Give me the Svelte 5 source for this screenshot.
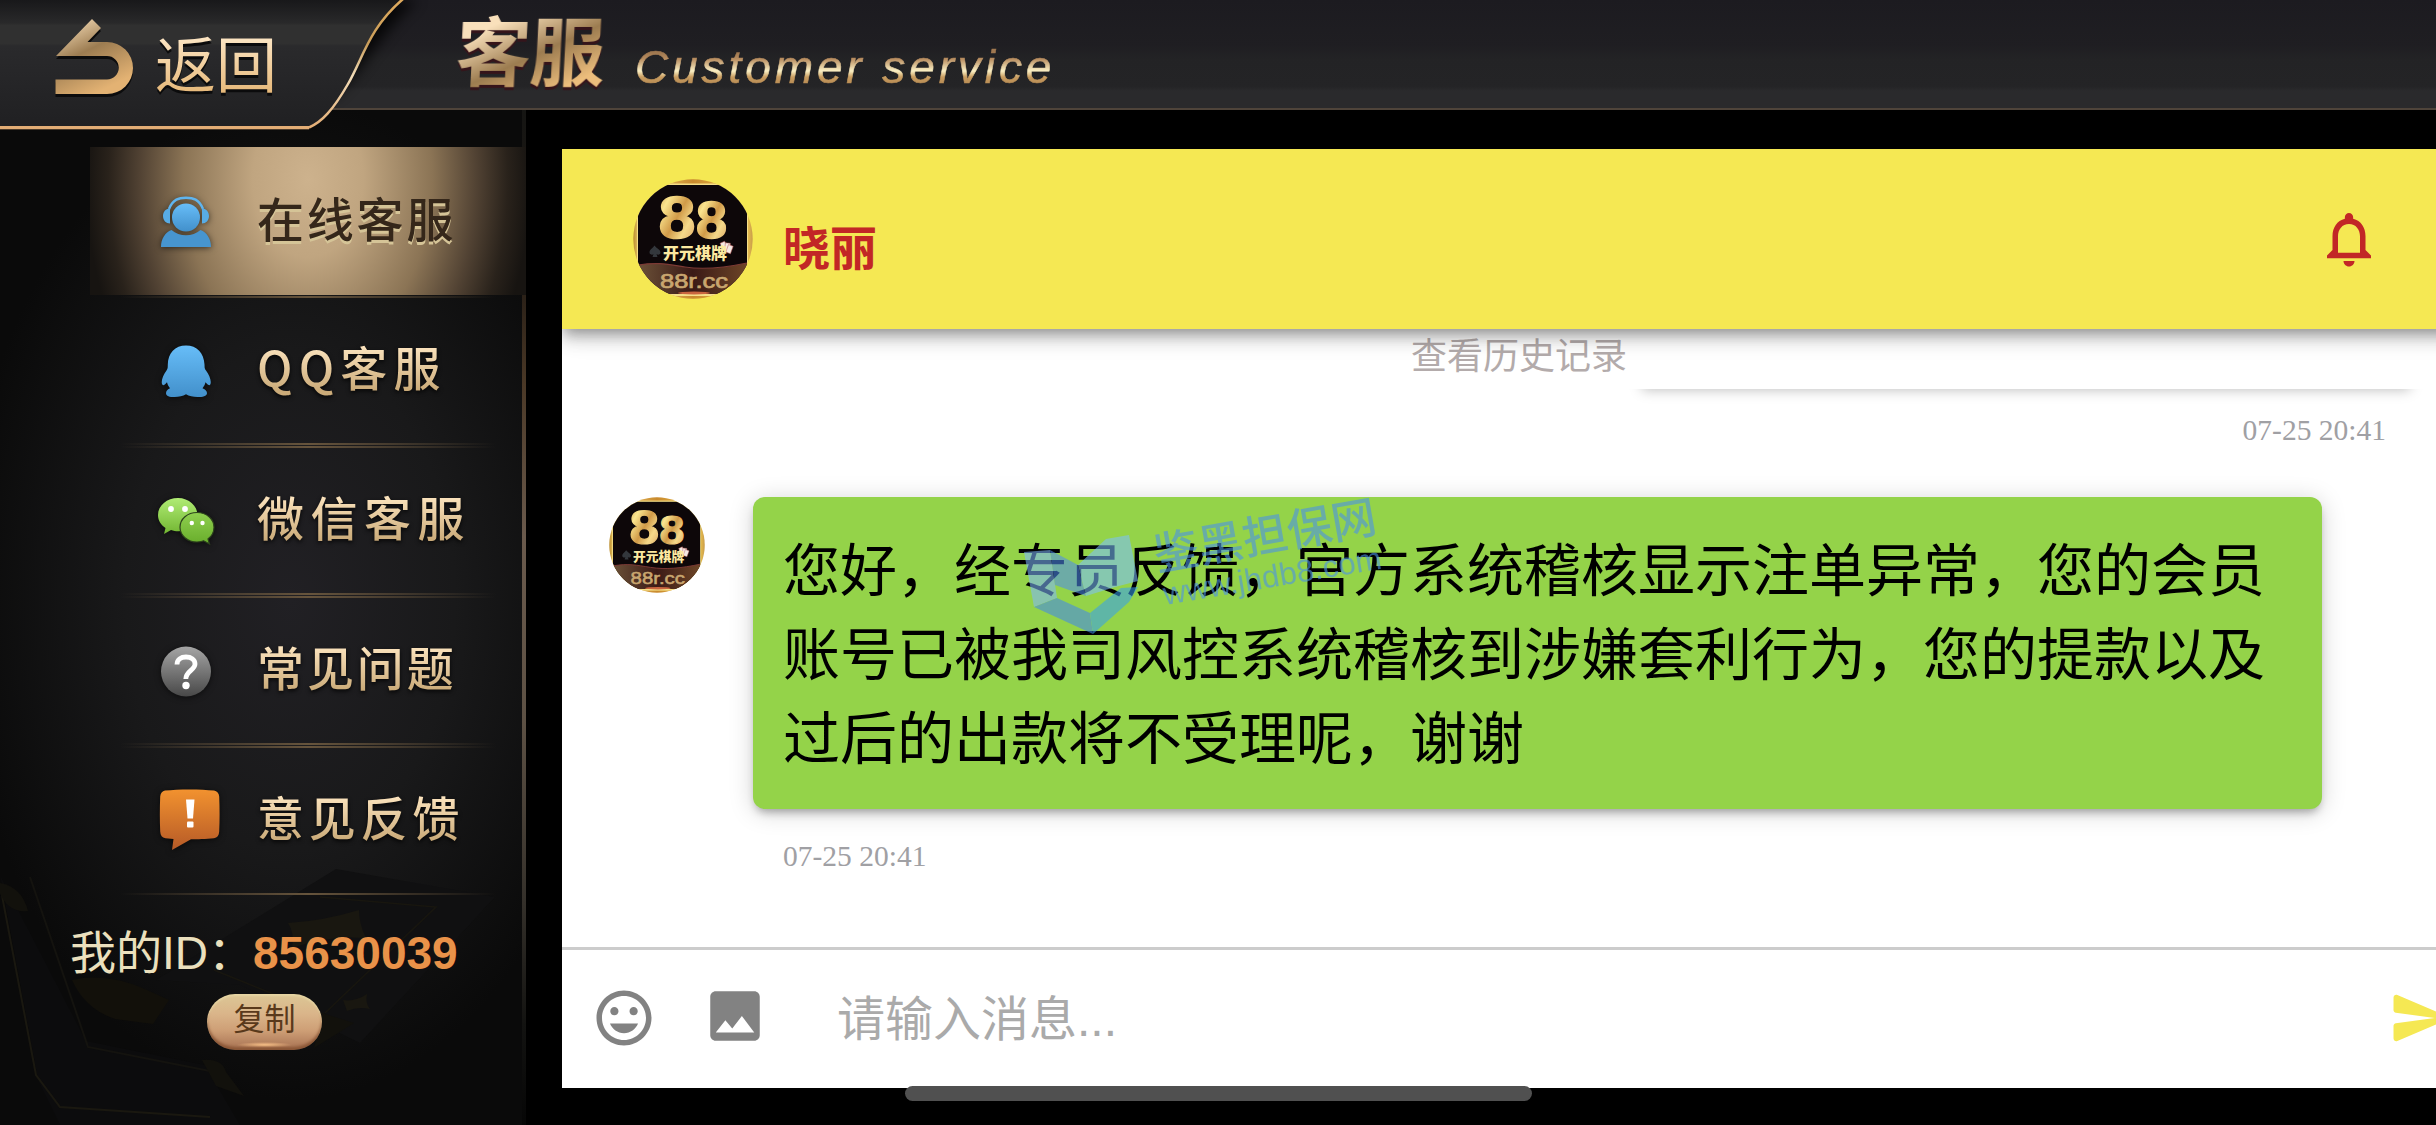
<script lang="ts">
	type Item = { id: string; label: string; spacing: number };

	const items: Item[] = [
		{ id: 'online', label: '在线客服', spacing: 2.8 },
		{ id: 'qq', label: 'QQ客服', spacing: 6.2 },
		{ id: 'wechat', label: '微信客服', spacing: 6.5 },
		{ id: 'faq', label: '常见问题', spacing: 2.9 },
		{ id: 'feedback', label: '意见反馈', spacing: 4.8 }
	];

	const lines = [
		'您好，经专员反馈，官方系统稽核显示注单异常，您的会员',
		'账号已被我司风控系统稽核到涉嫌套利行为，您的提款以及',
		'过后的出款将不受理呢，谢谢'
	];

	let active = $state('online');
	let message = $state('');
</script>

{#snippet avatar(size: number)}
	<svg class="avatar" width={size} height={size} viewBox="0 0 120 120">
		<defs>
			<linearGradient id="coin" x1="0" y1="0" x2="1" y2="1">
				<stop offset="0" stop-color="#c98f3c" />
				<stop offset=".25" stop-color="#fbe58f" />
				<stop offset=".5" stop-color="#d09a48" />
				<stop offset=".7" stop-color="#f5d98a" />
				<stop offset="1" stop-color="#d79a5c" />
			</linearGradient>
			<linearGradient id="rim" x1="0" y1="0" x2="1" y2="0">
				<stop offset="0" stop-color="#b98a2c" />
				<stop offset=".06" stop-color="#f3d778" />
				<stop offset=".5" stop-color="#c98a2e" />
				<stop offset=".94" stop-color="#f0c84f" />
				<stop offset="1" stop-color="#c79a4a" />
			</linearGradient>
			<linearGradient id="floor" x1="0" y1="0" x2="1" y2="0">
				<stop offset="0" stop-color="#6b5138" />
				<stop offset=".5" stop-color="#3b1a16" />
				<stop offset="1" stop-color="#6d4527" />
			</linearGradient>
			<clipPath id="round"><circle cx="60" cy="60" r="59.7" /></clipPath>
		</defs>
		<g clip-path="url(#round)">
			<rect width="120" height="120" fill="url(#rim)" />
			<rect x="4" y="4.500" width="111" height="112.500" fill="#f6df88" />
			<rect x="5" y="6" width="109" height="109" fill="#0d0709" />
			<path d="M5 86c20-3 28-1 47 2s38 1 62-4v31H5z" fill="url(#floor)" />
			<path d="M5 86c20-3 28-1 47 2s38 1 62-4" fill="none" stroke="#7c3a35" stroke-width="1.200" />
			<ellipse cx="61" cy="114" rx="16" ry="1.500" fill="#c9653f" />
			<g fill="url(#coin)" stroke="url(#coin)" font-family="'Liberation Sans', sans-serif" font-weight="700">
				<text x="25.500" y="59" font-size="60" stroke-width="1.500" textLength="37" lengthAdjust="spacingAndGlyphs">8</text>
				<text x="63" y="59" font-size="51" stroke-width="1.500" textLength="31" lengthAdjust="spacingAndGlyphs">8</text>
			</g>
			<path d="M21.500 66.500c-2 3-5 4-5 7 0 2 3 3 4 1.500l-1 3h5l-1-3c1.500 1.500 4 .5 4-1.500 0-3-4-4-6-7z" fill="#33373c" />
			<g fill="#f4e9e4" stroke="#b85a5a" stroke-width=".5">
				<rect x="89" y="63" width="5" height="8" transform="rotate(-25 91 68)" />
				<rect x="92" y="64" width="5" height="8" transform="rotate(5 94 68)" />
				<rect x="94" y="66" width="5" height="8" transform="rotate(20 96 70)" />
			</g>
			<text x="30" y="80" font-size="16" font-weight="900" fill="#fbe9a0" font-family="'Noto Sans CJK SC', sans-serif">开元棋牌</text>
			<text x="27" y="109" font-size="21" fill="#c9a66f" stroke="#c9a66f" stroke-width=".7" textLength="68" lengthAdjust="spacingAndGlyphs" font-family="'Liberation Sans', sans-serif">88r.cc</text>
		</g>
	</svg>
{/snippet}

{#snippet icon(id: string)}
	<svg class="icon" width="64" height="64" viewBox="0 0 64 64">
		<defs>
			<linearGradient id="blue" x1="0" y1="0" x2="0" y2="1">
				<stop offset="0" stop-color="#67bdf8" />
				<stop offset="1" stop-color="#4290cb" />
			</linearGradient>
			<linearGradient id="lime" x1="0" y1="0" x2="0" y2="1">
				<stop offset="0" stop-color="#b0ec74" />
				<stop offset="1" stop-color="#72b632" />
			</linearGradient>
			<linearGradient id="moss" x1="0" y1="0" x2="0" y2="1">
				<stop offset="0" stop-color="#8fcf4f" />
				<stop offset="1" stop-color="#68ad2b" />
			</linearGradient>
			<linearGradient id="grey" x1="0" y1="0" x2="0" y2="1">
				<stop offset="0" stop-color="#a5a5a5" />
				<stop offset="1" stop-color="#484848" />
			</linearGradient>
			<linearGradient id="orange" x1="0" y1="0" x2="0" y2="1">
				<stop offset="0" stop-color="#f2922f" />
				<stop offset="1" stop-color="#b65a27" />
			</linearGradient>
		</defs>
		{#if id === 'online'}
			<path d="M7 57c0-8 4-14.500 10.500-17 8 7 21 7 29 0C53 42.500 57 49 57 57z" fill="#4795cf" />
			<circle cx="32" cy="27.500" r="14" fill="url(#blue)" />
			<path d="M15 19C19 9 25 7.800 32 7.800S45 9 49 19" fill="none" stroke="#5fb4ee" stroke-width="2.500" />
			<path d="M16 18.500v15c-4 0-7-3-7-7.500s3-7.500 7-7.500zM48 18.500v15c4 0 7-3 7-7.500s-3-7.500-7-7.500z" fill="#58ace5" />
		{:else if id === 'qq'}
			<path
				d="M32 5.500c11 0 18 7.500 18.500 19 .2 3-.2 3.500 1.500 6 3.500 5 5.500 10 4.500 13.500-.6 2.200-2.500 1-5-1.800-.6 2.500-1.500 4-3 6 3 1.400 4.500 3 4.500 5 0 3-4.500 3.800-9.500 3.800-4.500 0-8.500-1-11.500-2.800-3 1.800-7 2.800-11.500 2.800-5 0-8.500-.8-8.500-3.800 0-2 1.200-3.600 4-5-1.500-2-2.400-3.500-3-6-2.500 2.800-4.200 4-5 1.800-1-3.500 1-8.500 4.500-13.500 1.500-2.500 1.200-3 1.300-6C14 13 21 5.500 32 5.500z"
				fill="url(#blue)"
			/>
		{:else if id === 'wechat'}
			<path
				d="M24 8C13 8 4 15.500 4 25c0 5.500 3 10 7.500 13L10 44l7-4c2.500.8 4.500 1.300 7.500 1.300 10 0 19-7.300 19-16.300S35 8 24 8z"
				fill="url(#lime)"
			/>
			<path
				d="M43 22.500c-9.500 0-17 6.500-17 14.700S33.500 52 43 52c2.500 0 4.700-.5 6.700-1.200L55.500 54 54 49c3.500-2.700 6-7 6-11.800 0-8.200-7.500-14.700-17-14.700z"
				fill="url(#moss)" stroke="#2d431c" stroke-width="1.200"
			/>
			<g fill="#fff">
				<circle cx="17" cy="19" r="2.900" /><circle cx="31" cy="19" r="2.900" />
				<circle cx="37.800" cy="33" r="2.200" /><circle cx="48.500" cy="33" r="2.200" />
			</g>
		{:else if id === 'faq'}
			<circle cx="32" cy="31.500" r="25" fill="url(#grey)" />
			<path d="M23 24.500c0-5 4-7.500 9-7.500 5.200 0 9 2.500 9 7 0 6-9.200 7-9.200 15" fill="none" stroke="#fff" stroke-width="4.800" />
			<circle cx="32" cy="45.500" r="3.700" fill="#fff" />
		{:else}
			<path
				d="M11 .5C24-1 47-1 60 .5c3 .5 5 3 5.200 6 .5 12 .5 24 0 35-.2 4-2 6.200-5.200 6.800-8 .8-17 1-23 1L18 60l1.500-11-8-.7c-3.500-.6-5-2.800-5.300-6.800-.5-11-.5-23 0-35 .3-3 2-5.500 4.800-6z"
				fill="url(#orange)"
			/>
			<path d="M32 9.500h8.500L39 28.500h-5.500z" fill="#fff" />
			<rect x="33" y="31.500" width="6.500" height="6" rx="1" fill="#fff" />
		{/if}
	</svg>
{/snippet}

<div class="page">
	<header>
		<div class="title">
			<h1>客服</h1>
			<p>Customer service</p>
		</div>
		<svg class="tab" width="440" height="140" viewBox="0 0 440 140">
			<defs>
				<linearGradient id="tab-fill" x1="0" y1="0" x2="0" y2="1">
					<stop offset="0" stop-color="#18181a" />
					<stop offset=".18" stop-color="#29292a" />
					<stop offset=".2" stop-color="#303030" />
					<stop offset=".34" stop-color="#303030" />
					<stop offset=".36" stop-color="#2a2a2c" />
					<stop offset="1" stop-color="#202022" />
				</linearGradient>
				<linearGradient id="tab-line" x1="0" y1="0" x2="0" y2="1">
					<stop offset="0" stop-color="#e0ab5e" />
					<stop offset=".35" stop-color="#c99d5a" />
					<stop offset=".6" stop-color="#f1dcb8" />
					<stop offset="1" stop-color="#e3ad75" />
				</linearGradient>
				<linearGradient id="arrow" x1="0" y1="0" x2=".5" y2="1">
					<stop offset=".1" stop-color="#f0d6b0" />
					<stop offset=".5" stop-color="#9c7c51" />
					<stop offset="1" stop-color="#e3b273" />
				</linearGradient>
				<filter id="cast" x="-20%" y="-20%" width="140%" height="140%"><feGaussianBlur stdDeviation="7" /></filter>
				<clipPath id="bar"><rect width="440" height="108" /></clipPath>
			</defs>
			<path d="M0 0H418C372 35 360 92 300 116H0z" clip-path="url(#bar)" filter="url(#cast)" opacity=".8" />
			<path d="M0 0H403C369 28 358 66 345 88S322 122 309 127.500H0z" fill="url(#tab-fill)" />
			<path d="M403-1C369 28 363 58 348 84S322 122 309 127.500" fill="none" stroke="url(#tab-line)" stroke-width="2.500" />
			<rect y="126" width="309" height="3.300" fill="#e3ad75" />
			<path d="M56 59 92 22l9 9-13.500 14H107a26 26 0 0 1 0 52H55.500V82.500H107a11.700 11.700 0 0 0 0-23.500z" fill="#0c0c0d" />
			<path d="M56 56 92 19l9 9-13.500 14H107a26 26 0 0 1 0 52H55.500V79.500H107a11.700 11.700 0 0 0 0-23.500z" fill="url(#arrow)" />
		</svg>
		<button class="back">返回</button>
	</header>

	<div class="body">
		<aside>
			<svg class="cards" width="522" height="290" viewBox="0 0 522 290">
				<path d="M0 40 86 206 205 230 240 290H60L38 245z" fill="#0c0c0d" />
				<path d="M0 50 36 240 60 272 210 282" fill="none" stroke="#1a1810" stroke-width="2" />
				<path d="M30 42 88 212 220 238" fill="none" stroke="#14130f" stroke-width="2" />
				<path d="M336 34 495 62 360 208 240 150 156 145z" fill="#101011" />
				<path d="M320 62 436 72 325 178M214 135 325 180" fill="none" stroke="#18160f" stroke-width="1.500" />
				<path d="M288 88q35-2 71-13 0 14 7 28-40-3-74 10 3-15-4-25z" fill="#191710" />
				<path d="M72 145q35-8 75 10l22 10-16 24-38-5q-30-10-43-39z" fill="#12100a" />
				<path d="M343 165q12 2 24-6-2 9 3 15-12-3-23 2z" fill="#191710" />
				<path d="M322 178l32 10-40 25zM202 225q20-2 24 12l18 24-28-10z" fill="#12110c" />
				<path d="M0 48q22 4 28 28-20 2-28-18z" fill="#12110c" />
			</svg>
			<nav>
				{#each items as item (item.id)}
					<button class="item" class:active={active === item.id} onclick={() => (active = item.id)}>
						{@render icon(item.id)}
						<span class="label" style="letter-spacing: {item.spacing}px">{item.label}</span>
					</button>
				{/each}
			</nav>
			<div class="account">
				<p>我的ID：<b>85630039</b></p>
				<button class="copy">复制</button>
			</div>
		</aside>

		<main>
			<div class="agent">
				{@render avatar(120)}
				<h2>晓丽</h2>
				<svg class="bell" width="66" height="66" viewBox="0 0 24 24">
					<path
						d="M12 22c1.100 0 2-.9 2-2h-4c0 1.100.9 2 2 2zm6-6v-5c0-3.070-1.630-5.640-4.500-6.320V4c0-.83-.67-1.500-1.500-1.500s-1.500.67-1.500 1.500v.68C7.640 5.360 6 7.920 6 11v5l-2 2v1h16v-1l-2-2zm-2 1H8v-6c0-2.480 1.510-4.500 4-4.500s4 2.020 4 4.500v6z"
					/>
				</svg>
			</div>

			<section>
				<div class="history">查看历史记录</div>
				<div class="sent"></div>
				<time class="right">07-25 20:41</time>
				<div class="message">
					{@render avatar(96)}
					<div class="bubble">
						{#each lines as line}
							<p>{line}</p>
						{/each}
						<svg class="mark" width="370" height="150" viewBox="0 0 370 150">
							<g opacity=".56">
								<path d="M13 15 39 13 46 61 23 70z" fill="#7fb8ff" />
								<path d="M39 13 67 28 75 59 44 48z" fill="#4f8df0" />
								<path d="M95 2 118-2 127 44 104 50 75 59 67 28z" fill="#7cc0ff" />
								<path d="M23 70 46 61 79 76 82 97z" fill="#4288ee" />
								<path d="M82 97 79 76 110 51 127 50 118 65z" fill="#37a0f0" />
							</g>
							<g fill="#4c93e6" opacity=".6">
								<text x="0" y="0" transform="translate(146 34) rotate(-10)" font-size="45" font-weight="500" textLength="225">鉴黑担保网</text>
								<text class="url" x="0" y="0" transform="translate(154 68) rotate(-9.500)" font-size="31.500" textLength="221">www.jhdb8.com</text>
							</g>
						</svg>
					</div>
				</div>
				<time>07-25 20:41</time>
			</section>

			<footer>
				<svg width="66" height="66" viewBox="0 0 24 24">
					<path
						d="M11.990 2C6.470 2 2 6.480 2 12s4.470 10 9.990 10C17.520 22 22 17.520 22 12S17.520 2 11.990 2zM12 20c-4.420 0-8-3.580-8-8s3.580-8 8-8 8 3.580 8 8-3.580 8-8 8zm3.500-9c.83 0 1.500-.67 1.500-1.500S16.330 8 15.500 8 14 8.670 14 9.500s.67 1.500 1.500 1.500zm-7 0c.83 0 1.500-.67 1.500-1.500S9.330 8 8.500 8 7 8.670 7 9.500 7.670 11 8.500 11zm3.500 6.500c2.330 0 4.310-1.460 5.110-3.500H6.890c.8 2.040 2.780 3.500 5.110 3.500z"
					/>
				</svg>
				<svg class="photo" width="66" height="66" viewBox="0 0 24 24">
					<path
						d="M21 19V5c0-1.100-.9-2-2-2H5c-1.100 0-2 .9-2 2v14c0 1.100.9 2 2 2h14c1.100 0 2-.9 2-2zM8.500 13.500l2.500 3.010L14.500 12l4.500 6H5l3.500-4.500z"
					/>
				</svg>
				<input bind:value={message} placeholder="请输入消息..." />
				<svg class="send" width="66" height="66" viewBox="0 0 24 24">
					<path
						d="M3.400 20.400l17.450-7.480c.81-.35.81-1.490 0-1.840L3.400 3.600c-.66-.29-1.390.2-1.390.91L2 9.120c0 .5.37.93.87.99L17 12 2.870 13.880c-.5.07-.87.5-.87 1l.01 4.610c0 .71.73 1.200 1.390.91z"
					/>
				</svg>
			</footer>
		</main>
	</div>
	<div class="home"></div>
</div>

<style>
	:global(body) {
		margin: 0;
		background: #000;
	}

	* {
		box-sizing: border-box;
	}

	h1,
	h2,
	p {
		margin: 0;
	}

	button {
		border: 0;
		padding: 0;
		background: none;
		font: inherit;
	}

	.page {
		position: relative;
		display: flex;
		flex-direction: column;
		width: 2436px;
		height: 1125px;
		overflow: hidden;
		background: #000;
		font-family: 'Liberation Sans', 'Noto Sans CJK SC', sans-serif;
	}

	header {
		position: relative;
		z-index: 1;
		flex: none;
		height: 110px;
		border-bottom: 2px solid #4f443a;
		background: linear-gradient(#1c1b20, #1f1e22 42%, #232325 55%, #242426 80%, #2a2a2c 84%, #2a2a2c);
	}

	.title {
		display: flex;
		align-items: flex-start;
		padding-left: 456px;
	}

	h1 {
		height: 108px;
		width: 179px;
		font-size: 75px;
		font-weight: 700;
		line-height: 108px;
		letter-spacing: -1px;
		white-space: nowrap;
		color: transparent;
		background: linear-gradient(155deg, #f9e0bb 22%, #9c7c50 48%, #ecbd7c 72%);
		background-clip: text;
		transform: skewX(-3deg);
		filter: drop-shadow(0 3px 0 #35141a);
	}

	.title p {
		padding-right: 10px;
		font-size: 46px;
		font-style: italic;
		line-height: 50px;
		margin-top: 42px;
		letter-spacing: 3.9px;
		white-space: nowrap;
		color: transparent;
		background: linear-gradient(#a07850 22%, #b88d60 34%, #fbf0c4 58%, #c99d60 70%, #b98d55 82%);
		background-clip: text;
		-webkit-text-stroke: 0.6px transparent;
	}

	.tab {
		position: absolute;
		top: 0;
		left: 0;
	}

	.back {
		position: absolute;
		top: 22px;
		left: 155px;
		font-size: 61px;
		line-height: 90px;
		color: transparent;
		background: linear-gradient(#fbe3c0 20%, #e5b676 82%);
		background-clip: text;
		filter: drop-shadow(0 3px 0 #0b0b0c);
	}

	.body {
		display: flex;
		flex: 1;
	}

	aside {
		position: relative;
		display: flex;
		flex-direction: column;
		width: 526px;
		padding-top: 37px;
		border-right: 4px solid;
		border-image: linear-gradient(#151513, #1f1812 15%, #4a3826 27%, #6a5a4c 42%, #5d5144 60%, #34302a 78%, #131311 90%, #060606) 1;
		background: radial-gradient(ellipse 330px 500px at 290px 490px, #212024, #19191a 50%, #0a0a0a 100%);
	}

	.cards {
		position: absolute;
		left: 0;
		bottom: 0;
	}

	nav {
		position: relative;
		padding-left: 90px;
		margin-right: -4px;
	}

	.item {
		position: relative;
		display: flex;
		align-items: center;
		width: 436px;
		height: 150px;
		padding-left: 64px;
	}

	.item::before,
	.item::after {
		content: '';
		position: absolute;
		left: 30px;
		right: 30px;
		height: 2px;
		background: linear-gradient(90deg, transparent, #66543c 50%, transparent);
	}

	.item::before {
		top: -1px;
	}

	.item::after {
		bottom: 2px;
	}

	.item.active::before {
		display: none;
	}

	.item.active::after {
		bottom: -1px;
	}

	.item:nth-child(2)::before {
		display: none;
	}

	.item.active {
		background: radial-gradient(ellipse 222px 310px at 50% 22%, #cdb28d 0, #c0a580 25%, #8b7455 56%, #514233 76%, #29221b 90%, #171411 100%);
		background-size: 100% 148px;
		background-repeat: no-repeat;
	}

	.icon {
		flex: none;
		overflow: visible;
		filter: drop-shadow(0 1px 3px rgba(0, 0, 0, 0.6));
	}

	.label {
		margin: -13px 0 0 37px;
		padding-left: 2px;
		font-family: 'Noto Sans CJK SC', sans-serif;
		font-size: 47px;
		font-weight: 500;
		line-height: 64px;
		white-space: nowrap;
		color: transparent;
		background: linear-gradient(#fbe3bd 20%, #cbab79 88%);
		background-clip: text;
		filter: drop-shadow(0 2px 2px rgba(0, 0, 0, 0.8));
	}

	.active .label {
		margin-top: -10px;
		color: #35271a;
		background: none;
		filter: drop-shadow(0 3px 0 #d5c497);
	}

	.account {
		position: relative;
		display: flex;
		flex-direction: column;
		align-items: center;
		padding-top: 23px;
	}

	.account p {
		align-self: flex-start;
		padding-left: 70px;
		font-size: 46px;
		line-height: 66px;
		white-space: nowrap;
		color: #ebe0bd;
	}

	.account b {
		margin-left: -1px;
		color: #e99249;
	}

	.copy {
		width: 115px;
		height: 56px;
		margin: 8px 0 0 7px;
		border-radius: 28px;
		color: #59391b;
		font-size: 31px;
		line-height: 46px;
		padding-bottom: 5px;
		background:
			radial-gradient(ellipse 28px 3px at 50% 51px, #ffc78c, transparent),
			linear-gradient(#dcc795, #dab58a 35%, #ce9f76 65%, #a77152 100%);
		box-shadow: inset 0 2px 2px #e6d5a3, inset 0 -3px 3px #8a5636;
	}

	main {
		display: flex;
		flex-direction: column;
		width: 1874px;
		height: 939px;
		margin: 39px 0 0 36px;
		background: #fff;
	}

	.agent {
		position: relative;
		z-index: 1;
		display: flex;
		align-items: center;
		height: 180px;
		margin-right: -30px;
		padding: 0 84px 0 71px;
		background: #f5e853;
		box-shadow: 0 6px 12px -3px rgba(0, 0, 0, 0.3), 0 12px 15px rgba(0, 0, 0, 0.14), 0 3px 30px rgba(0, 0, 0, 0.1);
		clip-path: inset(0 0 -60px 0);
	}

	.avatar {
		flex: none;
	}

	h2 {
		flex: 1;
		margin: 20px 0 0 30px;
		color: #c22726;
		font-size: 47px;
		line-height: 68px;
	}

	.bell {
		fill: #c22726;
	}

	section {
		flex: 1;
		display: flex;
		flex-direction: column;
	}

	.history {
		height: 50px;
		padding-left: 849px;
		font-size: 36px;
		line-height: 56px;
		color: #b3abab;
	}

	/* tail of the previous bubble, scrolled under the header */
	.sent {
		align-self: flex-end;
		width: 776px;
		height: 50px;
		margin: -40px 22px 0 0;
		background: #fff;
		box-shadow: 0 5px 12px -4px rgba(0, 0, 0, 0.25);
		clip-path: inset(50px -20px -30px -20px);
	}

	time {
		margin: 30px 0 0 221px;
		font: 29.5px/34px 'Liberation Serif', serif;
		color: #a0a0a4;
	}

	time.right {
		align-self: flex-end;
		margin: 24px 50px 1px 0;
	}

	.message {
		display: flex;
		align-items: flex-start;
		padding: 49px 0 0 47px;
	}

	.bubble {
		position: relative;
		width: 1569px;
		height: 312px;
		margin-left: 48px;
		padding: 32px 30px 28px;
		border-radius: 12px;
		background: #94d349;
		box-shadow: 0 6px 9px -3px rgba(0, 0, 0, 0.3), 0 3px 24px rgba(0, 0, 0, 0.18);
	}

	.bubble p {
		font-size: 57px;
		line-height: 84px;
		white-space: nowrap;
		color: #000;
	}

	.mark {
		position: absolute;
		top: 40px;
		left: 258px;
		overflow: visible;
		font-family: 'Noto Sans CJK SC', sans-serif;
	}

	.url {
		font-family: 'Liberation Sans', sans-serif;
	}

	footer {
		display: flex;
		align-items: flex-start;
		height: 141px;
		padding: 35px 0 0 29px;
		border-top: 3px solid #ccc;
		fill: #828282;
	}

	footer svg {
		flex: none;
	}

	.photo {
		margin: -2px 0 0 45px;
	}

	input {
		flex: 1;
		min-width: 0;
		height: 70px;
		margin-left: 69px;
		padding: 0;
		border: 0;
		outline: none;
		font: 48px/70px 'Liberation Sans', 'Noto Sans CJK SC', sans-serif;
	}

	input::placeholder {
		color: #aaa;
		opacity: 1;
	}

	.send {
		margin-right: -18px;
		fill: #f5e853;
	}

	.home {
		position: absolute;
		left: 905px;
		bottom: 24px;
		width: 627px;
		height: 15px;
		border-radius: 8px;
		background: #505050;
		z-index: 2;
	}
</style>
